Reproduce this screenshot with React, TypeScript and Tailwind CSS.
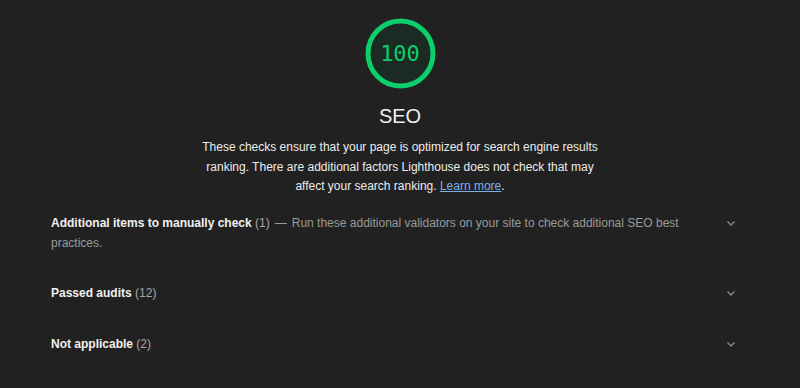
import React from "react";

const Chevron = () => (
  <svg width="12" height="12" viewBox="0 0 12 12" className="shrink-0">
    <path d="M2.5 4.5 L6 8 L9.5 4.5" fill="none" stroke="#8a8a8a" strokeWidth="1.4" />
  </svg>
);

const groups = [
  { title: "Additional items to manually check", count: 1, desc: "Run these additional validators on your site to check additional SEO best practices." },
  { title: "Passed audits", count: 12 },
  { title: "Not applicable", count: 2 },
];

const App: React.FC = () => {
  return (
    <div className="w-[800px] h-[388px] bg-[#212121] overflow-hidden font-['Liberation_Sans',Arial,sans-serif]">
      {/* Gauge */}
      <div className="flex flex-col items-center pt-[18px]">
        <div className="relative w-[71px] h-[71px]">
          <svg width="71" height="71" viewBox="0 0 71 71">
            <circle cx="35.5" cy="35.5" r="32.5" fill="#1b2a22" stroke="#0cce6b" strokeWidth="5" />
          </svg>
          <div className="absolute inset-0 flex items-center justify-center font-['DejaVu_Sans_Mono','Liberation_Mono',monospace] text-[22px] text-[#0cce6b]">
            100
          </div>
        </div>
        <div className="mt-[15px] text-[20px] leading-[24px] text-[#f0f0f0]">SEO</div>
        <p className="mt-[10px] w-[402px] text-center text-[12px] leading-[19.5px] text-[#ececec]">
          These checks ensure that your page is optimized for search engine results ranking. There are additional factors Lighthouse does not check that may affect your search ranking.{" "}
          <a className="text-[#7ab0e6] underline">Learn more</a>.
        </p>
      </div>

      {/* Groups */}
      <div className="mt-[16px] pl-[51px] pr-[63px]">
        {groups.map((g, i) => (
          <div key={i} className={`flex items-start justify-between ${i === 0 ? "h-[70px]" : "h-[51px]"}`}>
            <div className="w-[630px] text-[12px] leading-[20px]">
              <span className="font-bold text-[#f0f0f0]">{g.title}</span>{" "}
              <span className="text-[#a8a8a8]">({g.count})</span>
              {g.desc && (
                <span className="text-[#9a9a9a]">
                  <span className="mx-[5px]">—</span>
                  {g.desc}
                </span>
              )}
            </div>
            <div className="pt-[4px]">
              <Chevron />
            </div>
          </div>
        ))}
      </div>
    </div>
  );
};

export default App;
